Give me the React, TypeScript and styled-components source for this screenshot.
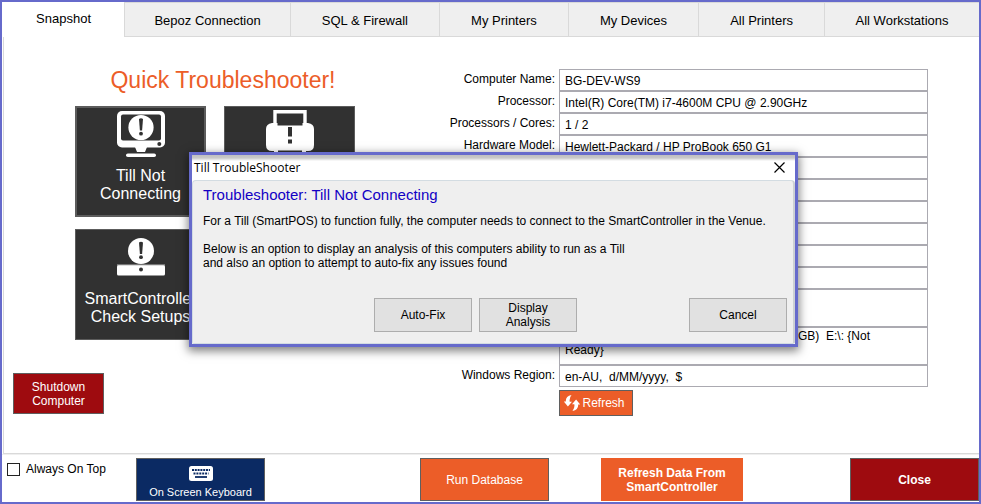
import React from "react";
import styled, { createGlobalStyle, css } from "styled-components";

const accent = "#666acb";
const orange = "#ec5d28";
const red = "#9e0b0f";

const GlobalStyle = createGlobalStyle`
  *, *::before, *::after { box-sizing: border-box; }
  body { margin: 0; background: #fff; }
  body, button, input, textarea {
    font-family: "Liberation Sans", Arial, sans-serif;
    font-size: 12px;
    color: #000;
  }
  button { cursor: pointer; margin: 0; }
`;

const Window = styled.div`
  position: relative;
  display: flex;
  flex-direction: column;
  min-height: 100vh;
  border: 2px solid ${accent};
  background: #fff;
`;

const Tabs = styled.nav`
  display: flex;
  height: 35px;
`;

const Tab = styled.button<{ $span: number; $active?: boolean }>`
  flex: ${(p) => p.$span} 1 0;
  min-width: 0;
  padding: 2px 0 0;
  border: 0;
  border-left: 1px solid #d9d9d9;
  border-top: 1px solid #d9d9d9;
  border-bottom: 1px solid #d9d9d9;
  background: #efefef;
  font-size: 13px;
  ${(p) =>
    p.$active &&
    css`
      padding: 0 0 2px;
      border-color: transparent;
      background: #fff;
    `}
`;

const Main = styled.main`
  flex: 1;
  display: grid;
  grid-template-columns: minmax(0, 438fr) minmax(0, 537fr);
  margin-left: 1px;
  border-left: 1px solid #d9d9d9;
  border-bottom: 1px solid #d9d9d9;
`;

const Left = styled.section`
  display: flex;
  flex-direction: column;
  padding-top: 28px;
`;

const Title = styled.h1`
  margin: 0 0 11px;
  font-size: 23px;
  line-height: 30px;
  font-weight: 400;
  text-align: center;
  color: ${orange};
`;

const Tiles = styled.div`
  display: grid;
  grid-template-columns: 131px 131px;
  justify-content: center;
  gap: 12px 18px;
  padding-right: 16px;
`;

const Tile = styled.button<{ $focused?: boolean }>`
  display: flex;
  flex-direction: column;
  align-items: center;
  justify-content: space-between;
  height: 111px;
  padding: ${(p) => (p.$focused ? "1px 0 12px" : "2px 0 13px")};
  border: ${(p) => (p.$focused ? 2 : 1)}px solid #5c5c5c;
  background: #313131;
  color: #fff;
  font-size: 16px;
  line-height: 18px;
  white-space: pre-line;
`;

const IconSlot = styled.span`
  display: flex;
  align-items: center;
  height: 50px;
`;

const ActionButton = styled.button<{ $tone: string; $bold?: boolean; $plain?: boolean }>`
  display: flex;
  align-items: center;
  justify-content: center;
  gap: 2px;
  height: 43px;
  padding: 0;
  border: 1px solid ${(p) => (p.$plain ? p.$tone : "#5f5f5f")};
  background: ${(p) => p.$tone};
  color: #fff;
  font-weight: ${(p) => (p.$bold ? 700 : 400)};
  line-height: 14px;
  white-space: pre-line;
`;

const ShutdownButton = styled(ActionButton)`
  width: 91px;
  height: 41px;
  margin: 33px 0 0 9px;
`;

const RefreshButton = styled(ActionButton)`
  width: 74px;
  height: 26px;
  padding-right: 3px;
  margin-top: 3px;
`;

const KeyboardButton = styled(ActionButton)`
  flex-direction: column;
  justify-content: flex-end;
  gap: 4px;
  padding-bottom: 1px;
  font-size: 11px;
`;

const Details = styled.section`
  display: grid;
  grid-template-columns: 117px minmax(0, 1fr);
  align-content: start;
  padding: 32px 51px 0 0;
`;

const Label = styled.label`
  padding: 2px 4px 0 0;
  line-height: 16px;
  text-align: right;
  white-space: nowrap;
`;

const Field = styled.input`
  grid-column: 2;
  width: 100%;
  height: 22px;
  padding: 2px 5px 0;
  border: 1px solid #abaab1;
  border-radius: 0;
  background: #fff;
  outline: 0;
`;

const TallField = styled.textarea<{ $indent?: number }>`
  grid-column: 2;
  display: block;
  width: 100%;
  height: 38px;
  padding: 1px 5px 0;
  border: 1px solid #abaab1;
  border-radius: 0;
  background: #fff;
  line-height: 14px;
  text-indent: ${(p) => p.$indent ?? 0}px;
  white-space: pre-wrap;
  overflow: hidden;
  resize: none;
  outline: 0;
`;

const RefreshCell = styled.div`
  grid-column: 2;
`;

const Footer = styled.footer`
  display: grid;
  grid-template-columns: 134px 129px minmax(8px, 155fr) 129px minmax(8px, 52fr) 142px minmax(8px, 107fr) 129px;
  align-items: start;
  padding: 3px 0 1px;
  border-top: 1px solid #efefef;
`;

const Cell = styled.div<{ $col: number }>`
  grid-column: ${(p) => p.$col};
  display: grid;
`;

const CheckLabel = styled.label`
  display: flex;
  align-items: center;
  gap: 6px;
  padding: 4px 0 0 5px;
  line-height: 14px;
`;

const Check = styled.input`
  appearance: none;
  width: 13px;
  height: 13px;
  margin: 0;
  border: 1px solid #222;
  background: #fff;
`;

const Dialog = styled.div`
  position: absolute;
  top: 150px;
  left: 187px;
  right: 181px;
  border: 3px solid ${accent};
  background: #fff;
  box-shadow: 0 3px 9px 1px rgba(0, 0, 0, 0.5);
`;

const DialogBar = styled.header`
  display: flex;
  align-items: center;
  justify-content: space-between;
  height: 25px;
  padding: 0 10px 0 2px;
  background: linear-gradient(#bfbfbf, #c9c9c9 3px, #fff 6px);
`;

const DialogTitle = styled.h2`
  margin: 0;
  font: 400 12px/24px "Open Sans", "Noto Sans", sans-serif;
`;

const CloseX = styled.button`
  display: flex;
  padding: 0;
  border: 0;
  background: none;
`;

const DialogBody = styled.div`
  padding: 5px 6px 11px 10px;
  border: 1px solid #d3dce2;
  border-right: 2px solid #cdd1d4;
  border-radius: 4px 4px 2px 2px;
  background: #efefef;
`;

const DialogHeading = styled.h3`
  margin: 0 0 10px;
  color: #1200c4;
  font-size: 15px;
  line-height: 18px;
  font-weight: 400;
`;

const Paragraph = styled.p`
  margin: 0 0 14px;
  line-height: 14px;
  white-space: pre-line;
`;

const DialogActions = styled.div`
  display: flex;
  justify-content: flex-end;
  gap: 7px;
  margin-top: 28px;
`;

const DialogButton = styled.button<{ $apart?: boolean }>`
  width: 98px;
  height: 34px;
  padding: 0;
  margin-left: ${(p) => (p.$apart ? 105 : 0)}px;
  border: 1px solid #adadad;
  background: #e1e1e1;
  line-height: 14px;
  white-space: pre-line;
`;

const Mark = ({ x, y }: { x: number; y: number }) => (
  <g transform={`translate(${x} ${y})`} fill="#313131">
    <path d="M-2-8.5Q0-10 2-8.5L1.1 3H-1.1Z" />
    <circle cx="0" cy="6.2" r="1.9" />
  </g>
);

const TillIcon = () => (
  <svg width="48" height="46" viewBox="0 0 48 46" aria-hidden="true">
    <rect width="48" height="36.5" rx="5" fill="#fff" />
    <rect x="4" y="3.5" width="40" height="26" rx="2" fill="#313131" />
    <circle cx="24" cy="16.5" r="12.6" fill="#fff" />
    <Mark x={24} y={16.5} />
    <circle cx="42.3" cy="33" r="2" fill="#313131" />
    <path d="M18 36h12l-2 5h-8z" fill="#fff" />
    <rect x="9" y="42.4" width="30" height="3.6" rx="1.8" fill="#fff" />
  </svg>
);

const PrinterIcon = () => (
  <svg width="48" height="48" viewBox="0 0 48 48" aria-hidden="true">
    <path d="M9 14V1.700h30V14" fill="none" stroke="#fff" strokeWidth="3.400" />
    <path d="M6 13h5.500v2.500h25V13H42q6 1 6 6v16q0 6-6 6h-2V37H8v4H6q-6 0-6-6V19q0-5 6-6z" fill="#fff" />
    <path d="M8 42V37h32v5l-3 5H11z" fill="#fff" />
    <path d="M12 40.500h24v6H12z" fill="#313131" />
    <path d="M22 17h4v9.500h-4zM22 29.500h4v4h-4z" fill="#313131" />
  </svg>
);

const ControllerIcon = () => (
  <svg width="48" height="38" viewBox="0 0 48 38" aria-hidden="true">
    <rect y="27" width="48" height="10.5" rx="1.5" fill="#fff" />
    <path d="M0 27h48" stroke="#bbb" />
    <circle cx="24" cy="13" r="13" fill="#fff" />
    <Mark x={24} y={13} />
    <circle cx="24" cy="31.5" r="2" fill="#313131" />
  </svg>
);

const KeyboardIcon = () => (
  <svg width="24" height="15" viewBox="0 0 24 15" aria-hidden="true">
    <rect width="24" height="15" rx="2.5" fill="#fff" />
    <g stroke="#0b2a63" strokeWidth="1.8">
      <path d="M3 4h18" strokeDasharray="2 .8" />
      <path d="M4.500 7.500h15" strokeDasharray="2 .9" />
      <path d="M6 11h12" />
    </g>
  </svg>
);

const RefreshIcon = () => (
  <svg width="16" height="16" viewBox="0 0 16 16" fill="#fff" aria-hidden="true">
    <path d="M7.500 0Q1.500 1 1.800 6.500H-.3L3.900 11.500 8 6.800H5.700Q5 3 7.500 0z" />
    <path d="M8.500 16q6-1 5.700-6.500h2.100L12.100 4.500 8 9.200h2.300Q11 13 8.500 16z" />
  </svg>
);

const tabs = [
  { name: "Snapshot", span: 122 },
  { name: "Bepoz Connection", span: 166 },
  { name: "SQL & Firewall", span: 149 },
  { name: "My Printers", span: 129 },
  { name: "My Devices", span: 130 },
  { name: "All Printers", span: 126 },
  { name: "All Workstations", span: 155 },
];

const details = [
  { label: "Computer Name:", value: "BG-DEV-WS9" },
  { label: "Processor:", value: "Intel(R) Core(TM) i7-4600M CPU @ 2.90GHz" },
  { label: "Processors / Cores:", value: "1 / 2" },
  { label: "Hardware Model:", value: "Hewlett-Packard / HP ProBook 650 G1" },
];

const emptyRows = [5, 6, 7, 8, 9, 10];

export default function App() {
  return (
    <Window>
      <GlobalStyle />
      <Tabs>
        {tabs.map((t, i) => (
          <Tab key={t.name} $span={t.span} $active={i === 0}>
            {t.name}
          </Tab>
        ))}
      </Tabs>
      <Main>
        <Left>
          <Title>Quick Troubleshooter!</Title>
          <Tiles>
            <Tile $focused>
              <IconSlot><TillIcon /></IconSlot>
              {"Till Not\nConnecting"}
            </Tile>
            <Tile aria-label="Printer">
              <IconSlot><PrinterIcon /></IconSlot>
            </Tile>
            <Tile>
              <IconSlot><ControllerIcon /></IconSlot>
              {"SmartController\nCheck Setups"}
            </Tile>
          </Tiles>
          <ShutdownButton $tone={red}>{"Shutdown\nComputer"}</ShutdownButton>
        </Left>
        <Details>
          {details.map((d, i) => (
            <React.Fragment key={d.label}>
              <Label htmlFor={`detail-${i}`}>{d.label}</Label>
              <Field id={`detail-${i}`} readOnly value={d.value} />
            </React.Fragment>
          ))}
          {emptyRows.map((n) => (
            <Field key={n} readOnly aria-label={`Detail ${n}`} />
          ))}
          <TallField readOnly aria-label="Detail 11" />
          <TallField readOnly aria-label="Drives" $indent={233} value={"GB)  E:\\: {Not\nReady}"} />
          <Label htmlFor="region">Windows Region:</Label>
          <Field id="region" readOnly value="en-AU,  d/MM/yyyy,  $" />
          <RefreshCell>
            <RefreshButton $tone={orange}>
              <RefreshIcon />
              Refresh
            </RefreshButton>
          </RefreshCell>
        </Details>
      </Main>
      <Footer>
        <CheckLabel>
          <Check type="checkbox" />
          Always On Top
        </CheckLabel>
        <Cell $col={2}>
          <KeyboardButton $tone="#0b2a63">
            <KeyboardIcon />
            On Screen Keyboard
          </KeyboardButton>
        </Cell>
        <Cell $col={4}>
          <ActionButton $tone={orange}>Run Database</ActionButton>
        </Cell>
        <Cell $col={6}>
          <ActionButton $tone={orange} $bold $plain>
            {"Refresh Data From\nSmartController"}
          </ActionButton>
        </Cell>
        <Cell $col={8}>
          <ActionButton $tone={red} $bold>Close</ActionButton>
        </Cell>
      </Footer>
      <Dialog role="dialog" aria-labelledby="dialog-title">
        <DialogBar>
          <DialogTitle id="dialog-title">Till TroubleShooter</DialogTitle>
          <CloseX aria-label="Close dialog">
            <svg width="11" height="11" viewBox="0 0 11 11" stroke="#000" strokeWidth="1.200" aria-hidden="true">
              <path d="M.5.5l10 10M10.500.5l-10 10" />
            </svg>
          </CloseX>
        </DialogBar>
        <DialogBody>
          <DialogHeading>Troubleshooter: Till Not Connecting</DialogHeading>
          <Paragraph>
            For a Till (SmartPOS) to function fully, the computer needs to connect to the SmartController in the Venue.
          </Paragraph>
          <Paragraph>
            {"Below is an option to display an analysis of this computers ability to run as a Till\nand also an option to attempt to auto-fix any issues found"}
          </Paragraph>
          <DialogActions>
            <DialogButton>Auto-Fix</DialogButton>
            <DialogButton>{"Display\nAnalysis"}</DialogButton>
            <DialogButton $apart>Cancel</DialogButton>
          </DialogActions>
        </DialogBody>
      </Dialog>
    </Window>
  );
}
